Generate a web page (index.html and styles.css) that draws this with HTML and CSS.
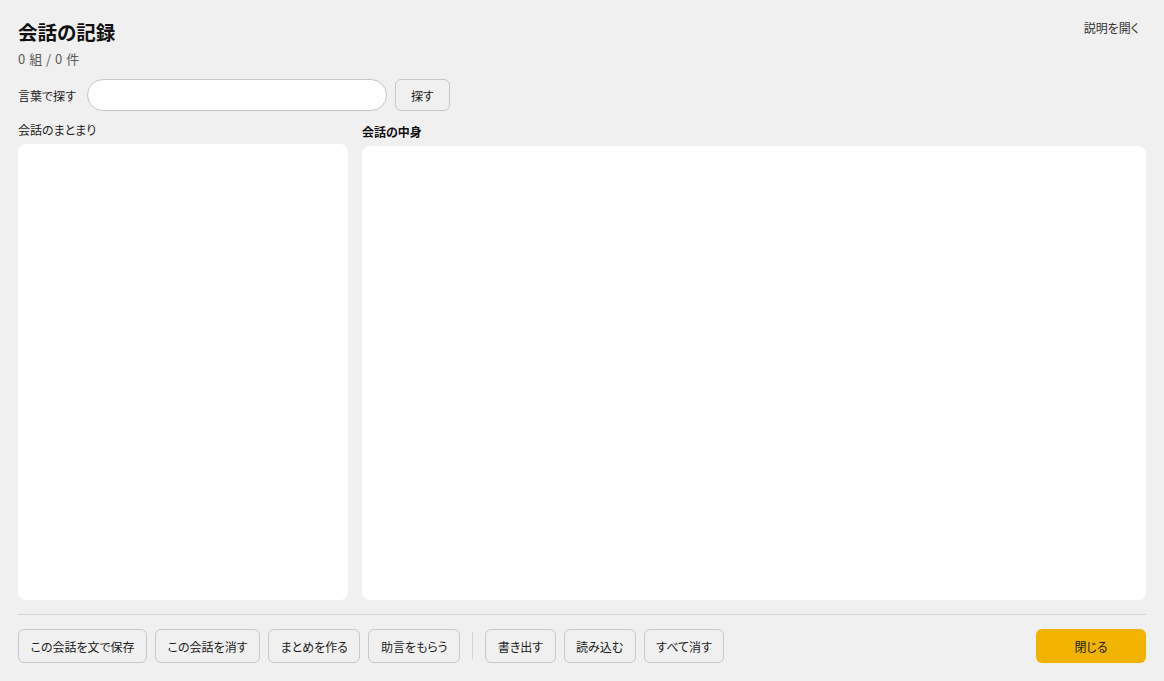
FILE: index.html
```html
<!DOCTYPE html>
<html lang="ja">
<head>
    <meta charset="UTF-8">
    <meta name="viewport" content="width=device-width, initial-scale=1.0">
    <title>会話の記録</title>
    <link rel="stylesheet" href="styles.css">
</head>
<body>
    <div class="log-window">
        <header class="log-header">
            <div class="heading">
                <h1>会話の記録</h1>
                <div class="count">0 組 / 0 件</div>
            </div>
            <button class="help-link">説明を開く</button>
        </header>

        <div class="search-row">
            <label for="search-word">言葉で探す</label>
            <input type="text" id="search-word" class="search-input">
            <button class="btn">探す</button>
        </div>

        <main class="columns">
            <section class="col col-list">
                <div class="col-title">会話のまとまり</div>
                <div class="panel"></div>
            </section>
            <section class="col col-detail">
                <div class="col-title strong">会話の中身</div>
                <div class="panel"></div>
            </section>
        </main>

        <footer class="actions">
            <button class="btn">この会話を文で保存</button>
            <button class="btn">この会話を消す</button>
            <button class="btn">まとめを作る</button>
            <button class="btn">助言をもらう</button>
            <span class="sep"></span>
            <button class="btn">書き出す</button>
            <button class="btn">読み込む</button>
            <button class="btn">すべて消す</button>
            <button class="btn btn-close">閉じる</button>
        </footer>
    </div>
</body>
</html>
```

FILE: styles.css
```css
/* Base */
html, body {
    margin: 0;
    padding: 0;
    height: 100%;
}

body {
    background-color: #f0f0f0;
    color: #1a1a1a;
    font-family: "Noto Sans CJK JP", "Noto Sans", sans-serif;
    font-feature-settings: "palt";
}

button, input {
    font-feature-settings: "palt";
}

.log-window {
    height: 100vh;
    box-sizing: border-box;
    padding: 18px;
    display: flex;
    flex-direction: column;
}

/* Header */
.log-header {
    display: flex;
    justify-content: space-between;
    align-items: flex-start;
}

.log-header h1 {
    margin: 0;
    font-size: 19.5px;
    line-height: 28px;
    font-weight: 700;
    color: #111;
}

.log-header .count {
    margin-top: 4px;
    font-size: 13px;
    line-height: 18px;
    color: #5a5a5a;
    word-spacing: 1px;
}

.help-link {
    margin: 1px 7px 0 0;
    padding: 0;
    border: none;
    background: none;
    font-family: inherit;
    font-size: 12px;
    line-height: 18px;
    color: #333;
    cursor: pointer;
}

/* Search */
.search-row {
    margin-top: 11px;
    display: flex;
    align-items: center;
    gap: 8px;
}

.search-row label {
    font-size: 12px;
    color: #222;
    margin-right: 3px;
}

.search-input {
    width: 300px;
    height: 32px;
    box-sizing: border-box;
    border: 1px solid #c6c6c6;
    border-radius: 16px;
    background: #fff;
    padding: 0 14px;
    font-family: inherit;
    font-size: 13px;
    outline: none;
}

.search-row .btn {
    height: 32px;
    padding: 0 15px;
}

/* Columns */
.columns {
    flex: 1;
    min-height: 0;
    margin-top: 10px;
    display: flex;
    gap: 14px;
}

.col {
    display: flex;
    flex-direction: column;
}

.col-list {
    width: 330px;
}

.col-detail {
    flex: 1;
    padding-top: 2px;
}

.col-title {
    font-size: 12px;
    line-height: 18px;
    color: #222;
    margin-bottom: 5px;
}

.col-title.strong {
    font-weight: 700;
    color: #111;
}

.panel {
    flex: 1;
    background: #fff;
    border-radius: 8px;
}

/* Footer actions */
.actions {
    margin-top: 14px;
    border-top: 1px solid #d6d6d6;
    padding-top: 14px;
    display: flex;
    align-items: center;
    gap: 8px;
}

.btn {
    height: 34px;
    padding: 0 11.5px;
    box-sizing: border-box;
    border: 1px solid #c8c8c8;
    border-radius: 6px;
    background: #f0f0f0;
    font-family: inherit;
    font-size: 12px;
    color: #1a1a1a;
    cursor: pointer;
    white-space: nowrap;
}

.sep {
    width: 1px;
    height: 28px;
    background: #d6d6d6;
    margin: 0 4px;
}

.btn-close {
    margin-left: auto;
    width: 110px;
    border: none;
    background: #f0b400;
    color: #1a1a1a;
}
```
